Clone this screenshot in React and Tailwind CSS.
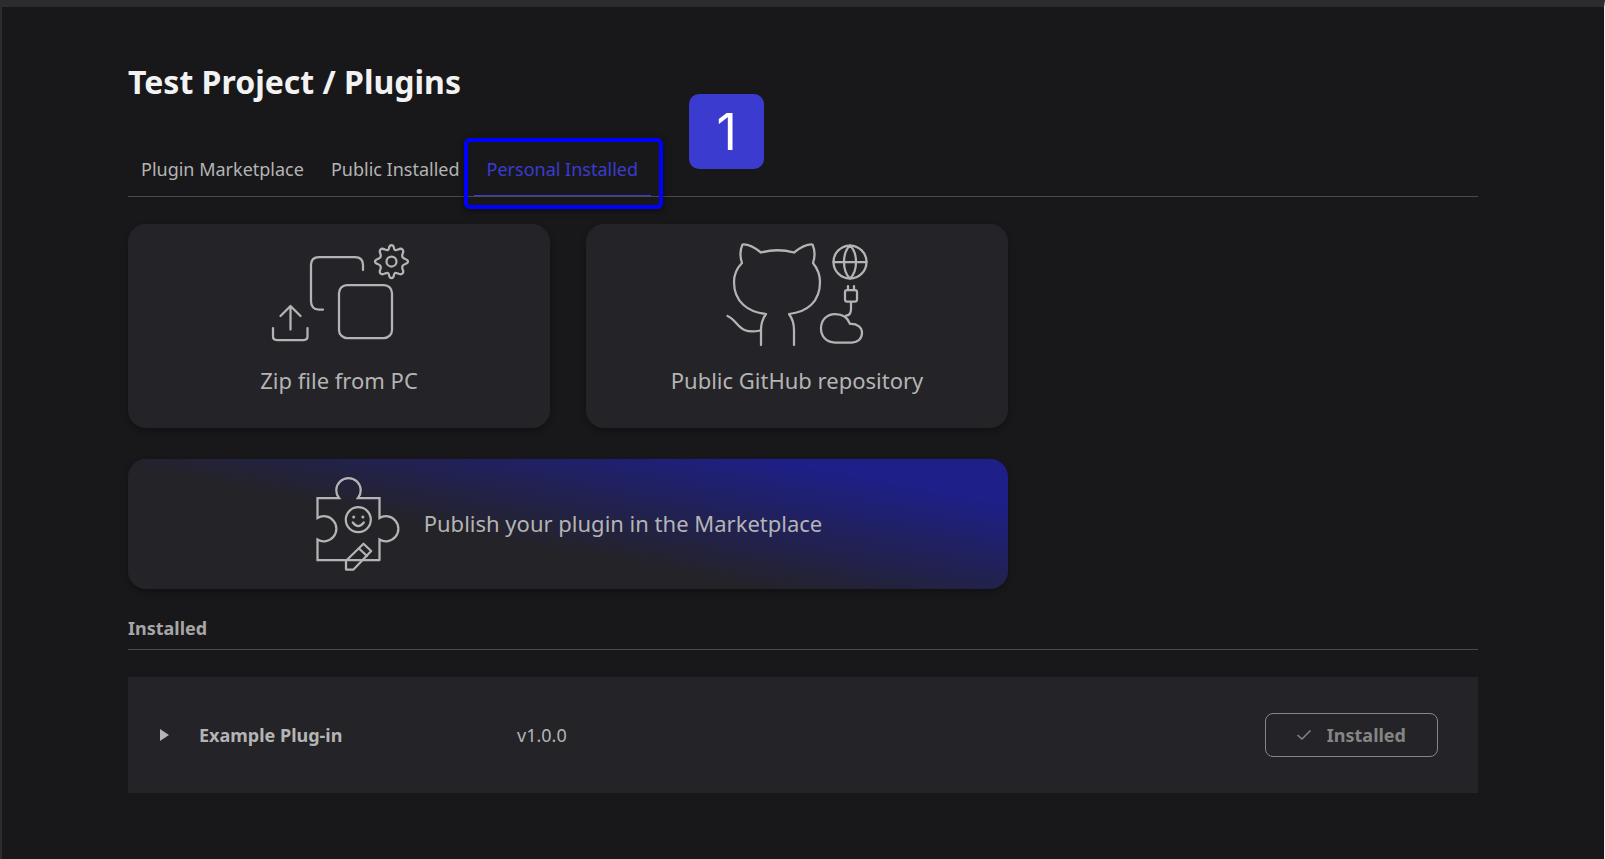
import React from "react";

const stroke = {
  fill: "none",
  stroke: "currentColor",
  strokeWidth: 2.25,
  strokeLinecap: "round",
  strokeLinejoin: "round",
};

function ZipIcon() {
  return (
    <svg width="140" height="104" viewBox="-3 0 140 104" aria-hidden="true" {...stroke}>
      <path d="M91 27V22Q91 14 83 14H47Q39 14 39 22V58Q39 66.500 47 66.500H51" />
      <rect x="67" y="42" width="53" height="53" rx="8" />
      <path d="M1 85V93.500Q1 97 5 97H31.500Q35.500 97 35.500 93.500V85M18.500 86.500V63M8.500 73L18.500 63L28.500 73" />
      <circle cx="119.500" cy="18.500" r="5" />
      <path
        transform="translate(119.500 18.500)"
        d="M-3.500-11.500C-1.500-12.500-3.500-16.500 0-16.500S1.500-12.500 3.500-11.500C5.700-10.600 8.500-14.500 11-12S9.500-7.500 11-4.500C12-2 16.500-3 16.500 0S12 2 11 4.500C9.500 7.500 13.500 9.500 11 12S5.700 10.600 3.500 11.500C1.500 12.500 3.500 16.500 0 16.500S-1.500 12.500-3.500 11.500C-5.700 10.600-8.500 14.500-11 12S-9.500 7.500-11 4.500C-12 2-16.500 3-16.500 0S-12-2-11-4.500C-9.500-7.500-13.500-9.500-11-12S-5.700-10.600-3.500-11.500Z"
      />
    </svg>
  );
}

function GithubIcon() {
  return (
    <svg width="142" height="104" viewBox="0 0 142 104" aria-hidden="true" {...stroke}>
      <path d="M35 102V87C35 79 37 75 40 71C22 69 8 59 8 39C8 31 11 25 16 20C14 14 14 7 16.500 1.500C22 1 28 4 35 9.500C46 6.500 57 6.500 68 9.500C75 4 81 1 86.500 1.500C89 7 89 14 87 20C91 25 94 31 94 39C94 59 81 69 63 71C66 75 68 79 68 87V102M34 87.500C12 92 13 78 1.500 73" />
      <circle cx="124" cy="19" r="16.500" />
      <path d="M107.500 19H140.500M124 2.500C116 10 116 28 124 35.500C132 28 132 10 124 2.500M122 43V47M128 43V47" />
      <rect x="119" y="47" width="12" height="11.500" rx="2" />
      <path d="M125 59V66C125 70 123 72.500 120 72.500M109 99.500C100 99.500 95 93 95 85.500C95 77 101 71 109 71C117 71 122 75 124 81C131 80.500 136 84 136 90C136 95.500 132 99.500 126 99.500Z" />
    </svg>
  );
}

function PuzzleIcon() {
  return (
    <svg width="84" height="98" viewBox="0 -4 84 98" aria-hidden="true" {...stroke}>
      <path strokeLinejoin="miter" d="M63.500 82H1.500V61.500A12.500 12.500 0 1 0 1.500 40V20H23A12.200 12.200 0 1 1 42 20H63.500V40A12.500 12.500 0 1 1 63.500 61.500V82" />
      <circle cx="42.300" cy="41.700" r="12.500" />
      <circle cx="37.700" cy="39" r="1.500" fill="currentColor" stroke="none" />
      <circle cx="46.900" cy="39" r="1.500" fill="currentColor" stroke="none" />
      <path d="M36.800 44.500Q42.300 51.500 47.800 44.500" />
      <path d="M30 91.500V82.700L47.500 65.700L55.200 73L37.500 91.500ZM42.700 70.300L51 78" />
    </svg>
  );
}

const tabs = ["Plugin Marketplace", "Public Installed", "Personal Installed"];

function SourceCard({ icon, children }) {
  return (
    <button className="flex h-[204px] flex-1 flex-col items-center rounded-[18px] bg-[#242327] pt-[19px] text-[22px] leading-8 text-[#b4b4b4] shadow-[0_3px_6px_rgba(0,0,0,0.3)]">
      {icon}
      <span className="mt-[17px]">{children}</span>
    </button>
  );
}

export default function App() {
  return (
    <div className="min-h-screen border-l-2 border-r border-t-[7px] border-[#2c2b30] border-r-[#f0f0f0] bg-[#18181a] px-[126px] pb-16 pt-[53px] font-['Noto_Sans',sans-serif] text-lg leading-7 text-[#b4b4b4]">
      <h1 className="text-[32px] font-bold leading-[44px] text-[#f2f2f2]">Test Project / Plugins</h1>

      <nav className="mt-[33px] flex gap-px border-b border-[#4a4a4a]">
        {tabs.map((tab) => {
          const active = tab === "Personal Installed";
          return (
            <a
              key={tab}
              href="#"
              aria-current={active ? "page" : undefined}
              className={
                active
                  ? "relative border-b border-[#3b3bd0] px-[13px] pb-3 pt-[18px] text-[#3b3bd0]"
                  : "border-b border-transparent px-[13px] pb-3 pt-[18px]"
              }
            >
              {tab}
              {active && (
                <>
                  <span className="absolute -bottom-[14px] -left-[10px] -right-[12px] top-px rounded-md border-4 border-[#0000ff] shadow-[0_2px_6px_rgba(0,0,0,0.5)]" />
                  <span className="absolute -top-[43px] left-full ml-[38px] flex size-[75px] items-center justify-center rounded-[10px] bg-[#3b3bd0] font-['Inter',sans-serif] text-[50px] text-white">
                    1
                  </span>
                </>
              )}
            </a>
          );
        })}
      </nav>

      <section className="mt-[27px] flex max-w-[880px] flex-col gap-[31px]">
        <div className="flex gap-9">
          <SourceCard icon={<ZipIcon />}>Zip file from PC</SourceCard>
          <SourceCard icon={<GithubIcon />}>Public GitHub repository</SourceCard>
        </div>
        <button className="flex h-[130px] items-center justify-center gap-6 rounded-[18px] bg-[linear-gradient(11deg,#242327_40%,#1e1f88_85%)] pb-[2px] pl-[2px] text-[22px] leading-8 shadow-[0_3px_6px_rgba(0,0,0,0.3)]">
          <PuzzleIcon />
          Publish your plugin in the Marketplace
        </button>
      </section>

      <h2 className="mt-[25px] border-b border-[#4a4a4a] pb-[7px] font-bold text-[#a6a6a6]">Installed</h2>

      <article className="mt-[27px] flex h-[116px] items-center bg-[#242327] px-10">
        <button aria-label="Expand Example Plug-in" className="-ml-2 mr-[30px]">
          <svg width="9" height="12" viewBox="0 0 9 12" fill="currentColor" aria-hidden="true">
            <path d="M0 0L9 6L0 12Z" />
          </svg>
        </button>
        <h3 className="w-[318px] font-bold">Example Plug-in</h3>
        <span>v1.0.0</span>
        <button className="ml-auto flex h-11 items-center gap-4 rounded-lg border border-[#858585] px-[31px] font-bold text-[#858585]">
          <svg width="14" height="10" viewBox="0 0 14 10" fill="none" stroke="currentColor" strokeWidth="1.500" aria-hidden="true">
            <path d="M0.500 5L5 9L13.500 0.500" />
          </svg>
          Installed
        </button>
      </article>
    </div>
  );
}
